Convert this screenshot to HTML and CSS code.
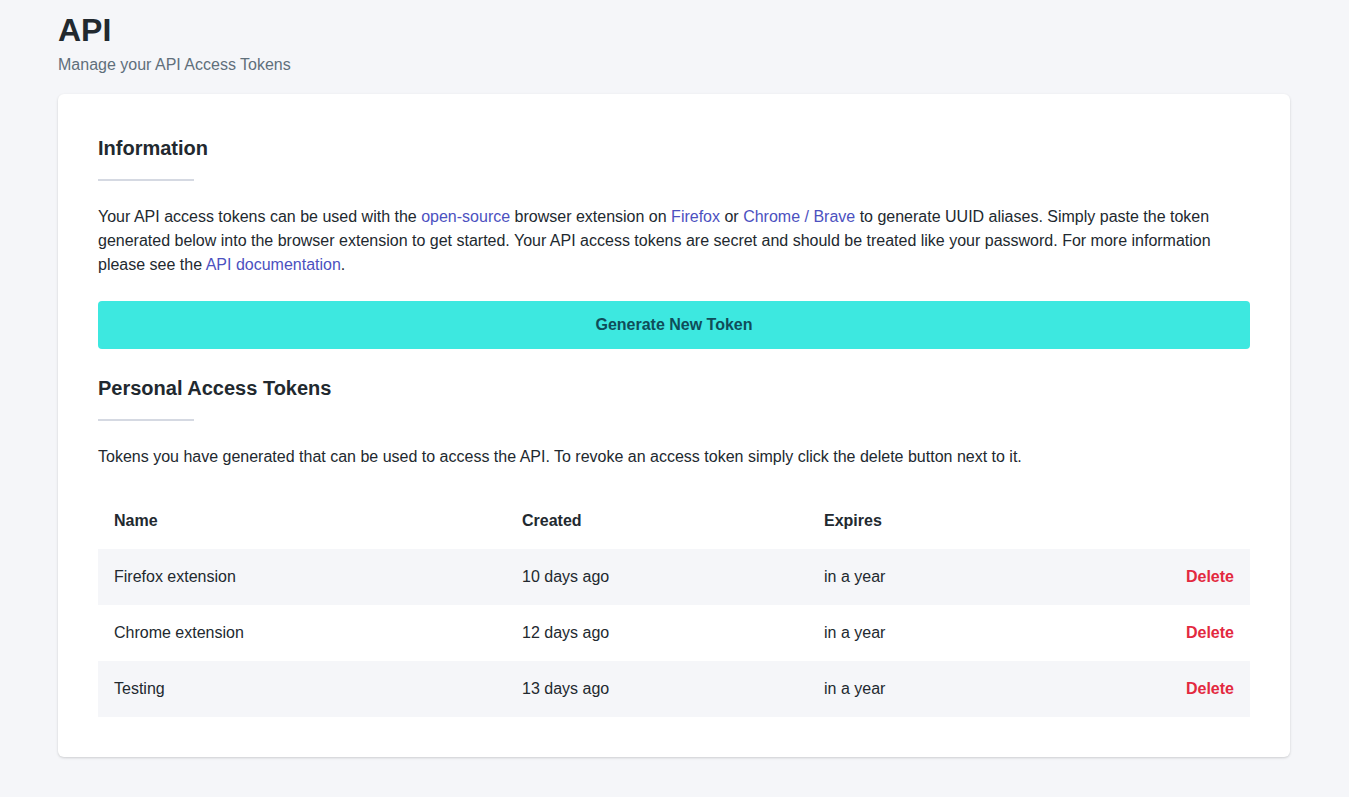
FILE: index.html
```html
<!DOCTYPE html>
<html lang="en">
<head>
<meta charset="utf-8">
<title>API</title>
<link rel="stylesheet" href="styles.css">
</head>
<body>
<div class="page">
  <header class="page-header">
    <h1 class="page-title">API</h1>
    <p class="page-subtitle">Manage your API Access Tokens</p>
  </header>
  <section class="card">
    <h2 class="section-title">Information</h2>
    <div class="divider"></div>
    <p class="text">Your API access tokens can be used with the <a class="link" href="#">open-source</a> browser extension on <a class="link" href="#">Firefox</a> or <a class="link" href="#">Chrome / Brave</a> to generate UUID aliases. Simply paste the token generated below into the browser extension to get started. Your API access tokens are secret and should be treated like your password. For more information please see the <a class="link" href="#">API documentation</a>.</p>
    <button class="btn-generate" type="button">Generate New Token</button>
    <h2 class="section-title">Personal Access Tokens</h2>
    <div class="divider"></div>
    <p class="text">Tokens you have generated that can be used to access the API. To revoke an access token simply click the delete button next to it.</p>
    <table class="tokens">
      <colgroup>
        <col class="c-name"><col class="c-created"><col class="c-expires"><col class="c-action">
      </colgroup>
      <thead>
        <tr><th>Name</th><th>Created</th><th>Expires</th><th></th></tr>
      </thead>
      <tbody>
        <tr class="alt"><td>Firefox extension</td><td>10 days ago</td><td>in a year</td><td class="action"><button class="btn-delete" type="button">Delete</button></td></tr>
        <tr><td>Chrome extension</td><td>12 days ago</td><td>in a year</td><td class="action"><button class="btn-delete" type="button">Delete</button></td></tr>
        <tr class="alt"><td>Testing</td><td>13 days ago</td><td>in a year</td><td class="action"><button class="btn-delete" type="button">Delete</button></td></tr>
      </tbody>
    </table>
  </section>
</div>
</body>
</html>
```
FILE: styles.css
```css
* { box-sizing: border-box; }
html, body { margin: 0; padding: 0; }
body {
  background: #f5f6f9;
  font-family: "Liberation Sans", Arial, sans-serif;
  color: #22292f;
  font-size: 16px;
  line-height: 24px;
}
.page {
  padding: 10px 59px 40px 58px;
}
.page-title {
  margin: 0;
  font-size: 32px;
  line-height: 40px;
  font-weight: 700;
  color: #22292f;
}
.page-subtitle {
  margin: 3px 0 0;
  font-size: 16px;
  line-height: 24px;
  color: #606f7b;
}
.card {
  margin-top: 17px;
  background: #fff;
  border-radius: 6px;
  box-shadow: 0 1px 3px rgba(0,0,0,0.12), 0 1px 2px rgba(0,0,0,0.05);
  padding: 40px;
}
.section-title {
  margin: 0;
  font-size: 20px;
  line-height: 28px;
  font-weight: 700;
  color: #22292f;
}
.divider {
  width: 96px;
  height: 2px;
  background: #d5d9e2;
  margin: 17px 0 24px;
}
.text {
  margin: 0;
  font-size: 16px;
  line-height: 24px;
  color: #22292f;
}
.link {
  color: #4c51bf;
  text-decoration: none;
}
.btn-generate {
  display: block;
  width: 100%;
  height: 48px;
  margin: 24px 0 25px;
  border: 0;
  border-radius: 4px;
  background: #3de8e0;
  color: #0f4d59;
  font-family: inherit;
  font-size: 16px;
  font-weight: 700;
  cursor: pointer;
}
.tokens {
  width: 100%;
  margin-top: 24px;
  border-collapse: collapse;
  table-layout: fixed;
}
.c-name { width: 408px; }
.c-created { width: 302px; }
.c-expires { width: 292px; }
.c-action { width: 150px; }
.tokens th, .tokens td {
  padding: 16px;
  text-align: left;
  font-size: 16px;
  line-height: 24px;
}
.tokens th { font-weight: 700; }
.tokens tr.alt td { background: #f5f6f9; }
.tokens td.action { text-align: right; }
.btn-delete {
  background: none;
  border: 0;
  padding: 0;
  font-family: inherit;
  font-size: 16px;
  line-height: 24px;
  font-weight: 700;
  color: #e3293f;
  cursor: pointer;
}
```
